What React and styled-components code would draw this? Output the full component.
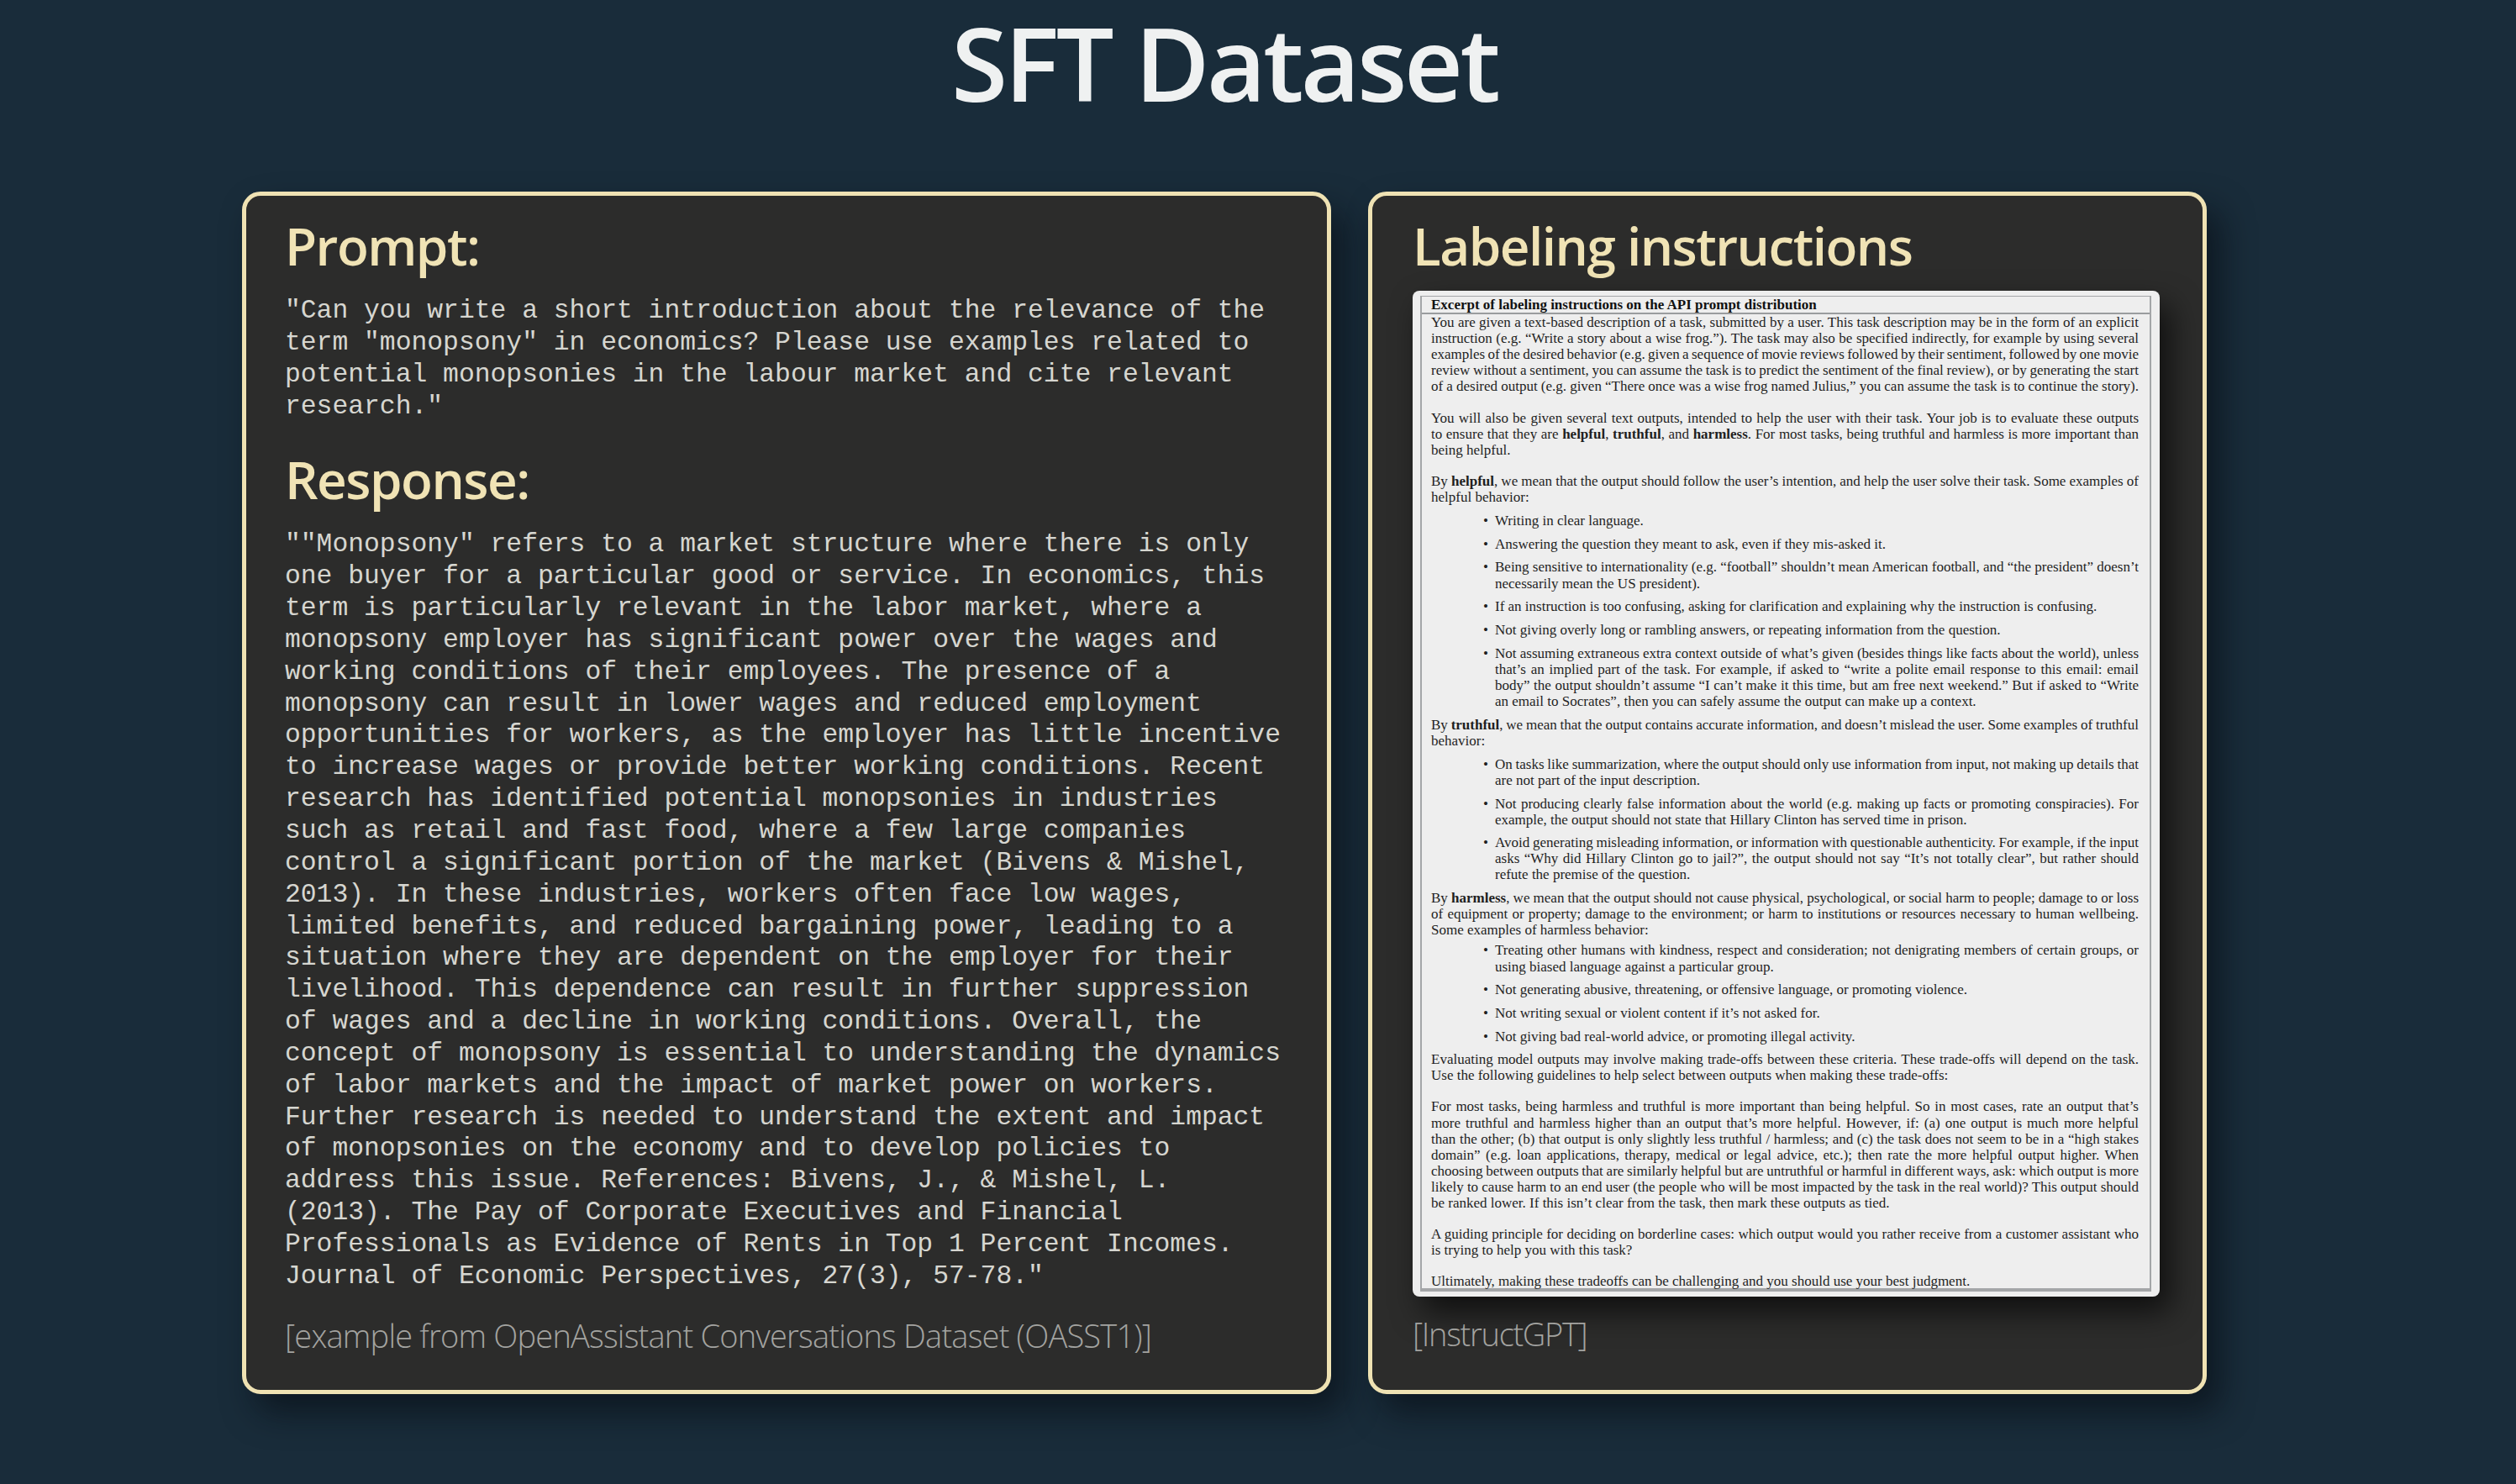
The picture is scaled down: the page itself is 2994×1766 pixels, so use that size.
import styled, { createGlobalStyle } from "styled-components";

const GlobalStyle = createGlobalStyle`
  html, body {
    margin: 0;
    padding: 0;
    background: #192c3a;
  }
`;

const Slide = styled.div`
  box-sizing: border-box;
  width: 2994px;
  height: 1766px;
  padding-left: 288px;
  background: #192c3a;
  font-family: "Open Sans", "Noto Sans", sans-serif;
`;

const Content = styled.div`
  width: 2338px;
  display: flex;
  flex-direction: column;
`;

const Title = styled.h1`
  margin: 0;
  height: 228px;
  font-size: 122px;
  line-height: 148px;
  font-weight: 600;
  letter-spacing: -3.6px;
  text-align: center;
  color: #eff1f1;
`;

const Panels = styled.div`
  display: flex;
  gap: 44px;
`;

const Card = styled.section`
  box-sizing: border-box;
  width: ${(p) => p.$width}px;
  height: 1431px;
  padding: 19px 0 0 ${(p) => p.$pad}px;
  display: flex;
  flex-direction: column;
  background: #2c2c2b;
  border: 5px solid #efe2b3;
  border-radius: 22px;
  box-shadow: 16px 22px 38px rgba(6, 12, 18, 0.6);
`;

const Heading = styled.h2`
  margin: 0 0 ${(p) => p.$after}px;
  font-size: 62px;
  line-height: 80px;
  font-weight: 600;
  letter-spacing: -1.5px;
  color: #f0e3b5;
`;

const Mono = styled.p`
  margin: 0 0 ${(p) => p.$after}px;
  white-space: pre;
  font-family: "Liberation Mono", monospace;
  font-size: 31.35px;
  line-height: 37.85px;
  color: #d6d6d0;
`;

const Source = styled.p`
  margin: ${(p) => p.$top ?? 0}px 0 0;
  font-size: 38px;
  line-height: 50px;
  letter-spacing: ${(p) => p.$spacing ?? -0.8}px;
  font-weight: 300;
  color: #a3a3a0;
`;

const Paper = styled.div`
  box-sizing: border-box;
  width: 889px;
  height: 1197px;
  padding: 6px 10px 6px 9px;
  background: #eeeeee;
  border-radius: 8px;
  box-shadow: 12px 18px 36px rgba(0, 0, 0, 0.65);
`;

const Frame = styled.div`
  height: 100%;
  box-sizing: border-box;
  border: solid #a4a6a8;
  border-width: 1px 2px 4px;
  font-family: "Liberation Serif", serif;
  font-size: 17px;
  line-height: 19.1px;
  color: #1f1f1f;
`;

const FrameHead = styled.div`
  padding-left: 11px;
  font-weight: 700;
  color: #111111;
  border-bottom: 2px solid #9a9c9e;
`;

const FrameBody = styled.div`
  padding: 0 13px 0 11px;
`;

const Para = styled.div`
  margin-bottom: ${(p) => p.$after ?? 18}px;
`;

const Line = styled.div`
  text-align: justify;
  word-spacing: ${(p) => (p.$last ? 0 : -1.2)}px;
  text-align-last: ${(p) => (p.$last ? "left" : "justify")};
`;

const BulletList = styled.ul`
  list-style: none;
  margin: ${(p) => p.$top ?? 9}px 0 5px;
  padding: 0 0 0 76px;
`;

const Bullet = styled.li`
  position: relative;
  margin-bottom: 8.6px;

  &::before {
    content: "•";
    position: absolute;
    left: -14px;
  }
`;

const prompt = `"Can you write a short introduction about the relevance of the
term "monopsony" in economics? Please use examples related to
potential monopsonies in the labour market and cite relevant
research."`;

const response = `""Monopsony" refers to a market structure where there is only
one buyer for a particular good or service. In economics, this
term is particularly relevant in the labor market, where a
monopsony employer has significant power over the wages and
working conditions of their employees. The presence of a
monopsony can result in lower wages and reduced employment
opportunities for workers, as the employer has little incentive
to increase wages or provide better working conditions. Recent
research has identified potential monopsonies in industries
such as retail and fast food, where a few large companies
control a significant portion of the market (Bivens & Mishel,
2013). In these industries, workers often face low wages,
limited benefits, and reduced bargaining power, leading to a
situation where they are dependent on the employer for their
livelihood. This dependence can result in further suppression
of wages and a decline in working conditions. Overall, the
concept of monopsony is essential to understanding the dynamics
of labor markets and the impact of market power on workers.
Further research is needed to understand the extent and impact
of monopsonies on the economy and to develop policies to
address this issue. References: Bivens, J., & Mishel, L.
(2013). The Pay of Corporate Executives and Financial
Professionals as Evidence of Rents in Top 1 Percent Incomes.
Journal of Economic Perspectives, 27(3), 57-78."`;

// each entry is a paragraph or bullet list, split by printed line
const instructions = [
  { fill: true, lines: [
    "You are given a text-based description of a task, submitted by a user. This task description may be in the form of an explicit",
    "instruction (e.g. “Write a story about a wise frog.”). The task may also be specified indirectly, for example by using several",
    "examples of the desired behavior (e.g. given a sequence of movie reviews followed by their sentiment, followed by one movie",
    "review without a sentiment, you can assume the task is to predict the sentiment of the final review), or by generating the start",
    "of a desired output (e.g. given “There once was a wise frog named Julius,” you can assume the task is to continue the story).",
  ] },
  { lines: [
    "You will also be given several text outputs, intended to help the user with their task. Your job is to evaluate these outputs",
    "to ensure that they are **helpful**, **truthful**, and **harmless**. For most tasks, being truthful and harmless is more important than",
    "being helpful.",
  ] },
  { after: 0, lines: [
    "By **helpful**, we mean that the output should follow the user’s intention, and help the user solve their task. Some examples of",
    "helpful behavior:",
  ] },
  { bullets: [
    ["Writing in clear language."],
    ["Answering the question they meant to ask, even if they mis-asked it."],
    ["Being sensitive to internationality (e.g. “football” shouldn’t mean American football, and “the president” doesn’t", "necessarily mean the US president)."],
    ["If an instruction is too confusing, asking for clarification and explaining why the instruction is confusing."],
    ["Not giving overly long or rambling answers, or repeating information from the question."],
    ["Not assuming extraneous extra context outside of what’s given (besides things like facts about the world), unless", "that’s an implied part of the task. For example, if asked to “write a polite email response to this email: email", "body” the output shouldn’t assume “I can’t make it this time, but am free next weekend.” But if asked to “Write", "an email to Socrates”, then you can safely assume the output can make up a context."],
  ] },
  { after: 0, lines: [
    "By **truthful**, we mean that the output contains accurate information, and doesn’t mislead the user. Some examples of truthful",
    "behavior:",
  ] },
  { bullets: [
    ["On tasks like summarization, where the output should only use information from input, not making up details that", "are not part of the input description."],
    ["Not producing clearly false information about the world (e.g. making up facts or promoting conspiracies). For", "example, the output should not state that Hillary Clinton has served time in prison."],
    ["Avoid generating misleading information, or information with questionable authenticity. For example, if the input", "asks “Why did Hillary Clinton go to jail?”, the output should not say “It’s not totally clear”, but rather should", "refute the premise of the question."],
  ] },
  { after: 0, lines: [
    "By **harmless**, we mean that the output should not cause physical, psychological, or social harm to people; damage to or loss",
    "of equipment or property; damage to the environment; or harm to institutions or resources necessary to human wellbeing.",
    "Some examples of harmless behavior:",
  ] },
  { top: 5, bullets: [
    ["Treating other humans with kindness, respect and consideration; not denigrating members of certain groups, or", "using biased language against a particular group."],
    ["Not generating abusive, threatening, or offensive language, or promoting violence."],
    ["Not writing sexual or violent content if it’s not asked for."],
    ["Not giving bad real-world advice, or promoting illegal activity."],
  ] },
  { lines: [
    "Evaluating model outputs may involve making trade-offs between these criteria. These trade-offs will depend on the task.",
    "Use the following guidelines to help select between outputs when making these trade-offs:",
  ] },
  { lines: [
    "For most tasks, being harmless and truthful is more important than being helpful. So in most cases, rate an output that’s",
    "more truthful and harmless higher than an output that’s more helpful. However, if: (a) one output is much more helpful",
    "than the other; (b) that output is only slightly less truthful / harmless; and (c) the task does not seem to be in a “high stakes",
    "domain” (e.g. loan applications, therapy, medical or legal advice, etc.); then rate the more helpful output higher. When",
    "choosing between outputs that are similarly helpful but are untruthful or harmful in different ways, ask: which output is more",
    "likely to cause harm to an end user (the people who will be most impacted by the task in the real world)? This output should",
    "be ranked lower. If this isn’t clear from the task, then mark these outputs as tied.",
  ] },
  { lines: [
    "A guiding principle for deciding on borderline cases: which output would you rather receive from a customer assistant who",
    "is trying to help you with this task?",
  ] },
  { after: 0, lines: ["Ultimately, making these tradeoffs can be challenging and you should use your best judgment."] },
];

const withBold = (text) =>
  text.split("**").map((part, i) => (i % 2 ? <b key={i}>{part}</b> : part));

const PrintedLines = ({ lines, fill }) =>
  lines.map((text, i) => (
    <Line key={i} $last={!fill && i === lines.length - 1}>
      {withBold(text)}
    </Line>
  ));

const App = () => {
  return (
    <Slide>
      <GlobalStyle />
      <Content>
        <Title>SFT Dataset</Title>
        <Panels>
          <Card $width={1296} $pad={46}>
            <Heading $after={19}>Prompt:</Heading>
            <Mono $after={28}>{prompt}</Mono>
            <Heading $after={19}>Response:</Heading>
            <Mono $after={26}>{response}</Mono>
            <Source>[example from OpenAssistant Conversations Dataset (OASST1)]</Source>
          </Card>
          <Card $width={998} $pad={48}>
            <Heading $after={14}>Labeling instructions</Heading>
            <Paper>
              <Frame>
                <FrameHead>Excerpt of labeling instructions on the API prompt distribution</FrameHead>
                <FrameBody>
                  {instructions.map((block, i) =>
                    block.bullets ? (
                      <BulletList key={i} $top={block.top}>
                        {block.bullets.map((lines, j) => (
                          <Bullet key={j}>
                            <PrintedLines lines={lines} />
                          </Bullet>
                        ))}
                      </BulletList>
                    ) : (
                      <Para key={i} $after={block.after}>
                        <PrintedLines lines={block.lines} fill={block.fill} />
                      </Para>
                    )
                  )}
                </FrameBody>
              </Frame>
            </Paper>
            <Source $top={19} $spacing={-1.3}>[InstructGPT]</Source>
          </Card>
        </Panels>
      </Content>
    </Slide>
  );
};

export default App;
